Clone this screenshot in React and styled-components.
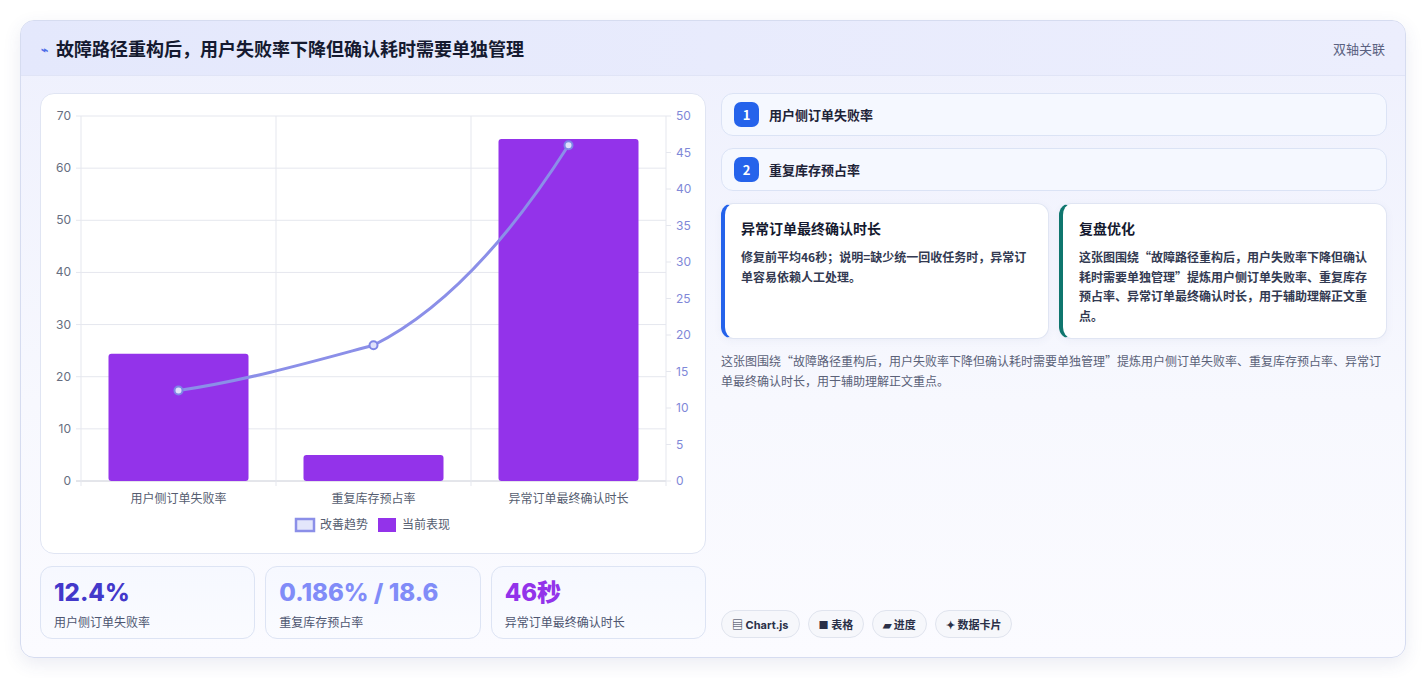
import React from "react";
import styled, { createGlobalStyle } from "styled-components";

const G = createGlobalStyle`
  body{margin:0;background:#fff;font-family:"Inter","Noto Sans CJK SC",sans-serif;}
  *{box-sizing:border-box;}
`;
const Page = styled.div`padding:20px 20px 20px 20px;height:678px;`;
const Card = styled.div`
  width:1386px;height:638px;border:1px solid #d6dcf0;border-radius:14px;overflow:hidden;
  background:linear-gradient(180deg,#eef0fd 0%,#f7f8fe 60%,#fbfbff 100%);
  box-shadow:0 6px 18px rgba(60,70,140,.10);display:flex;flex-direction:column;
`;
const Header = styled.div`
  height:55px;display:flex;align-items:center;justify-content:space-between;padding:0 20px;
  background:linear-gradient(90deg,#e4e8fc,#eceefd);border-bottom:1px solid #e0e4f6;
`;
const Title = styled.h1`margin:0;font-size:18px;font-weight:700;color:#151a30;display:flex;align-items:center;gap:8px;
  font-family:"Noto Sans CJK SC",sans-serif;`;
const Tag = styled.span`font-size:13px;color:#5a6180;font-family:"Noto Sans CJK SC",sans-serif;`;
const Body = styled.div`flex:1;display:grid;grid-template-columns:666px 666px;gap:15px;padding:17px 19px 18px 19px;`;
const Col = styled.div`display:flex;flex-direction:column;gap:12px;`;
const ChartCard = styled.div`height:461px;background:#fff;border:1px solid #e0e5f3;border-radius:14px;position:relative;`;
const Stats = styled.div`display:grid;grid-template-columns:repeat(3,1fr);gap:10px;`;
const Stat = styled.div`height:73px;border:1px solid #dde4f4;border-radius:12px;background:linear-gradient(180deg,#f6f8ff,#fafbff);padding:12px 13px;`;
const Big = styled.div`font-size:24px;font-weight:800;color:${p=>p.c};line-height:28px;font-family:"Inter","Noto Sans CJK SC",sans-serif;`;
const Small = styled.div`font-size:12px;color:#4d5570;margin-top:6px;font-family:"Noto Sans CJK SC",sans-serif;`;
const Item = styled.div`height:43px;border:1px solid #dbe3f5;border-radius:12px;background:#f5f8ff;display:flex;align-items:center;gap:10px;padding:0 12px;
  font-size:13px;font-weight:700;color:#1e2338;font-family:"Noto Sans CJK SC",sans-serif;`;
const Num = styled.span`width:25px;height:25px;border-radius:7px;background:#2563eb;color:#fff;display:flex;align-items:center;justify-content:center;font-size:13px;font-weight:700;`;
const Pair = styled.div`display:grid;grid-template-columns:1fr 1fr;gap:10px;`;
const Note = styled.div`height:136px;background:#fff;border-radius:12px;border:1px solid #e0e5f3;border-left:4px solid ${p=>p.c};padding:14px 16px;
  font-family:"Noto Sans CJK SC",sans-serif;box-shadow:0 2px 8px rgba(60,70,140,.05);`;
const NoteT = styled.div`font-size:14px;font-weight:700;color:#151a30;margin-bottom:9px;`;
const NoteP = styled.div`font-size:12px;font-weight:600;color:#333a52;line-height:19.5px;`;
const Para = styled.p`margin:0;font-size:12px;color:#5a6178;line-height:20px;font-family:"Noto Sans CJK SC",sans-serif;`;
const Chips = styled.div`margin-top:auto;display:flex;gap:8px;padding-bottom:1px;`;
const Chip = styled.span`height:28px;padding:0 10px;border:1px solid #e0e4ee;border-radius:14px;background:#f6f7fb;font-size:11px;font-weight:700;color:#2a3048;
  display:flex;align-items:center;gap:4px;font-family:"Inter","Noto Sans CJK SC",sans-serif;`;

const X0=40, X1=625, Y0=22, Y1=387; // within chart card coordinates
const ly=v=>Y1-(v/70)*(Y1-Y0);
const ry=v=>Y1-(v/50)*(Y1-Y0);
const cats=["用户侧订单失败率","重复库存预占率","异常订单最终确认时长"];
const bars=[24.4,5,65.6];
const line=[12.4,18.6,46];

function Chart(){
  const cw=(X1-X0)/3;
  const cx=i=>X0+cw*i+cw/2;
  const pts=line.map((v,i)=>[cx(i),ry(v)]);
  const d=`M${pts[0][0]},${pts[0][1]} C${pts[0][0]+70},${pts[0][1]-10} ${pts[1][0]-45},${pts[1][1]+12} ${pts[1][0]},${pts[1][1]} C${pts[1][0]+60},${pts[1][1]-30} ${pts[2][0]-70},${pts[2][1]+110} ${pts[2][0]},${pts[2][1]}`;
  return (
    <svg width="664" height="459" style={{display:"block"}} fontFamily="Inter, Noto Sans CJK SC, sans-serif">
      {[0,10,20,30,40,50,60,70].map(v=>(
        <g key={v}>
          <line x1={X0-5} x2={X1} y1={ly(v)} y2={ly(v)} stroke={v===0?"#c9ccd6":"#e5e7ee"}/>
          <text x={X0-10} y={ly(v)+4} fontSize="12" fill="#666e80" textAnchor="end">{v}</text>
        </g>
      ))}
      {[0,5,10,15,20,25,30,35,40,45,50].map(v=>(
        <g key={v}>
          <line x1={X1} x2={X1+5} y1={ry(v)} y2={ry(v)} stroke="#e5e7ee"/>
          <text x={X1+10} y={ry(v)+4} fontSize="12" fill="#7f88d8">{v}</text>
        </g>
      ))}
      {[0,1,2,3].map(i=><line key={i} x1={X0+cw*i} x2={X0+cw*i} y1={Y0} y2={Y1+5} stroke="#e5e7ee"/>)}
      {bars.map((v,i)=>(
        <rect key={i} x={cx(i)-70} y={ly(v)} width="140" height={Y1-ly(v)} rx="3" fill="#9333ea"/>
      ))}
      <path d={d} fill="none" stroke="#8b8fe8" strokeWidth="3"/>
      {pts.map((p,i)=><circle key={i} cx={p[0]} cy={p[1]} r="4" fill="#dfe1fb" stroke="#7e86e6" strokeWidth="2"/>)}
      {cats.map((c,i)=><text key={i} x={cx(i)} y={409} fontSize="12" fill="#555d70" textAnchor="middle">{c}</text>)}
      <rect x="255" y="425" width="18" height="12" fill="#e3e6fb" stroke="#8b8fe8" strokeWidth="2.5"/>
      <text x="279" y="435" fontSize="12" fill="#555d70">改善趋势</text>
      <rect x="337" y="424" width="18" height="14" fill="#9333ea"/>
      <text x="361" y="435" fontSize="12" fill="#555d70">当前表现</text>
    </svg>
  );
}

export default function App(){
  return (<Page><G/>
    <Card>
      <Header>
        <Title><span style={{color:"#4f6ee8",fontSize:12}}>⌁</span>故障路径重构后，用户失败率下降但确认耗时需要单独管理</Title>
        <Tag>双轴关联</Tag>
      </Header>
      <Body>
        <Col>
          <ChartCard><Chart/></ChartCard>
          <Stats>
            <Stat><Big c="#4338ca">12.4%</Big><Small>用户侧订单失败率</Small></Stat>
            <Stat><Big c="#818cf8">0.186% / 18.6</Big><Small>重复库存预占率</Small></Stat>
            <Stat><Big c="#9333ea">46秒</Big><Small>异常订单最终确认时长</Small></Stat>
          </Stats>
        </Col>
        <Col>
          <Item><Num>1</Num>用户侧订单失败率</Item>
          <Item><Num>2</Num>重复库存预占率</Item>
          <Pair>
            <Note c="#2563eb"><NoteT>异常订单最终确认时长</NoteT><NoteP>修复前平均46秒；说明=缺少统一回收任务时，异常订单容易依赖人工处理。</NoteP></Note>
            <Note c="#0f766e"><NoteT>复盘优化</NoteT><NoteP>这张图围绕“故障路径重构后，用户失败率下降但确认耗时需要单独管理”提炼用户侧订单失败率、重复库存预占率、异常订单最终确认时长，用于辅助理解正文重点。</NoteP></Note>
          </Pair>
          <Para>这张图围绕“故障路径重构后，用户失败率下降但确认耗时需要单独管理”提炼用户侧订单失败率、重复库存预占率、异常订单最终确认时长，用于辅助理解正文重点。</Para>
          <Chips>
            <Chip>▤ Chart.js</Chip><Chip>■ 表格</Chip><Chip>▰ 进度</Chip><Chip>✦ 数据卡片</Chip>
          </Chips>
        </Col>
      </Body>
    </Card>
  </Page>);
}
